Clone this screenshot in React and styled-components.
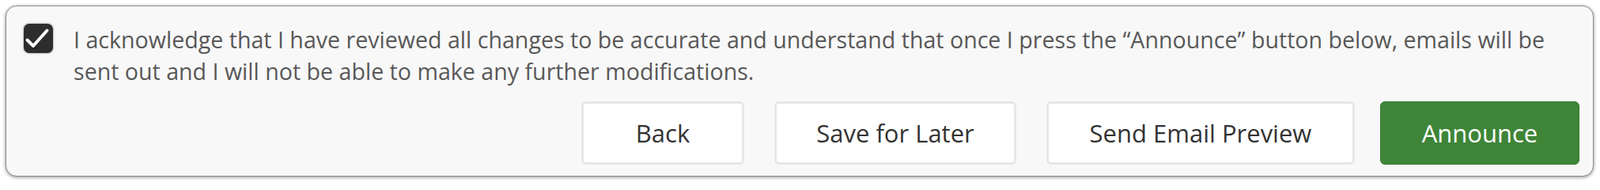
import React from "react";
import styled, { createGlobalStyle } from "styled-components";

const Global = createGlobalStyle`
  html, body { margin: 0; padding: 0; background: #ffffff; }
  body { font-family: "Open Sans", "Liberation Sans", Arial, sans-serif; }
  * { box-sizing: border-box; }
`;

const Page = styled.div`
  padding: 7px 8px 8px 7px;
`;

const Panel = styled.section`
  width: 2008px;
  background: #f8f8f8;
  border: 1px solid #8e8e8e;
  border-radius: 14px;
  box-shadow: 0 1px 4px rgba(0, 0, 0, 0.45);
  padding: 22px 17px 14px 22px;
`;

const AckRow = styled.label`
  display: flex;
  align-items: flex-start;
  gap: 26px;
  cursor: pointer;
`;

const CheckBox = styled.span`
  flex: 0 0 auto;
  width: 37px;
  height: 37px;
  border-radius: 7px;
  background: #2d2d2d;
  box-shadow: 0 0 2px 1px rgba(0, 0, 0, 0.22);
  display: flex;
  align-items: center;
  justify-content: center;
`;

const AckText = styled.p`
  margin: 0;
  font-family: "Open Sans", "Liberation Sans", Arial, sans-serif;
  font-size: 28.6px;
  line-height: 40px;
  color: #585858;
`;

const Actions = styled.div`
  display: flex;
  justify-content: flex-end;
  margin-top: 18px;
`;

const Button = styled.button`
  height: 80px;
  width: ${(p) => p.$w}px;
  margin-left: ${(p) => (p.$primary ? 32 : 38)}px;
  border-radius: 6px;
  border: ${(p) => (p.$primary ? "1px solid #367b31" : "3px solid #e7e7e7")};
  background: ${(p) => (p.$primary ? "#3e8538" : "#ffffff")};
  color: ${(p) => (p.$primary ? "#ffffff" : "#333333")};
  font-family: "Open Sans", "Liberation Sans", Arial, sans-serif;
  font-size: 31px;
  padding: 0;
  cursor: pointer;
`;

export default function App() {
  return (
    <>
      <Global />
      <Page>
        <Panel>
          <AckRow>
            <CheckBox>
              <svg width="37" height="37" viewBox="0 0 37 37">
                <path
                  d="M4.5 20.5 L12 28 L29.5 8.5"
                  fill="none"
                  stroke="#ffffff"
                  strokeWidth="4"
                  strokeLinecap="round"
                  strokeLinejoin="round"
                />
              </svg>
            </CheckBox>
            <AckText>
              I acknowledge that I have reviewed all changes to be accurate and understand that once I press the “Announce” button below, emails will be sent out and I will not be able to make any further modifications.
            </AckText>
          </AckRow>
          <Actions>
            <Button $w={206}>Back</Button>
            <Button $w={306}>Save for Later</Button>
            <Button $w={390}>Send Email Preview</Button>
            <Button $w={252} $primary>Announce</Button>
          </Actions>
        </Panel>
      </Page>
    </>
  );
}
